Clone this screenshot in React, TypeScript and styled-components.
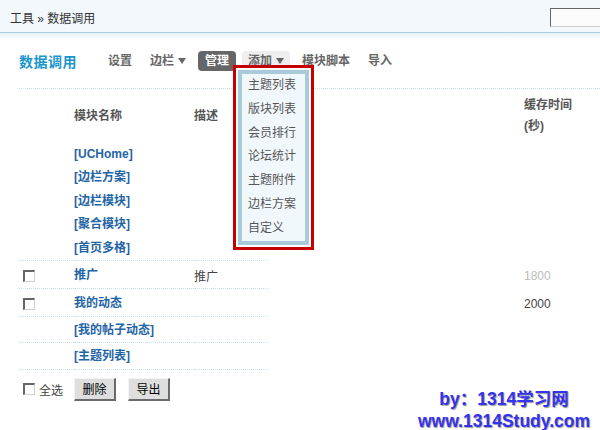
import styled, { createGlobalStyle } from "styled-components";

const GlobalStyle = createGlobalStyle`
  html, body {
    margin: 0;
    padding: 0;
    background: #fff;
  }
  body {
    font: 12px "Liberation Sans", "Noto Sans CJK SC", sans-serif;
    color: #333;
  }
`;

const Page = styled.div`
  position: relative;
  width: 600px;
  height: 430px;
  overflow: hidden;
`;

const TopBar = styled.div`
  height: 32px;
  display: flex;
  align-items: center;
  padding-left: 10px;
  background: #f2f8fb;
  border-bottom: 1px solid #a9cfdc;
  overflow: hidden;
`;

const Crumb = styled.div`
  flex: 1;
  color: #333;
  padding-top: 3px;
`;

const SearchBox = styled.input`
  flex-shrink: 0;
  width: 62px;
  height: 19px;
  margin-right: -12px;
  margin-top: 3px;
  box-sizing: border-box;
  border-style: solid;
  border-width: 1px;
  border-color: #666 #ccc #ccc #666;
  background: #fcfcfc;
`;

const Main = styled.div`
  padding: 17px 0 0 19px;
  background: linear-gradient(to bottom, #e6f1f6 0, #fff 8px) no-repeat;
`;

const NavRow = styled.div`
  display: flex;
  align-items: center;
  height: 20px;
  padding-top: 1px;
  margin-bottom: 17px;
`;

const Title = styled.h1`
  margin: 0 25px 0 0;
  font-size: 14px;
  font-weight: bold;
  color: #1996cc;
  letter-spacing: 0.5px;
`;

const Nav = styled.div`
  display: flex;
  gap: 6px;
`;

const NavItem = styled.div<{ $variant?: "active" | "open" }>`
  position: relative;
  height: 20px;
  line-height: 20px;
  padding: 0 ${(p) => (p.$variant === "active" ? "7px" : "6px")};
  font-weight: bold;
  color: ${(p) => (p.$variant === "active" ? "#fff" : "#666")};
  background: ${(p) =>
    p.$variant === "active" ? "#666" : p.$variant === "open" ? "#eeeeee" : "transparent"};
  border-radius: 4px;
  white-space: nowrap;
`;

const Caret = styled.span`
  display: inline-block;
  margin-left: 4px;
  vertical-align: 1px;
  border-left: 4px solid transparent;
  border-right: 4px solid transparent;
  border-top: 6px solid #666;
`;

const Menu = styled.div`
  position: absolute;
  top: 14px;
  left: -9px;
  z-index: 5;
  width: 81px;
  box-sizing: border-box;
  border: 3px solid #c40000;
  padding: 2px;
  background: #fff;
`;

const MenuInner = styled.ul`
  margin: 0;
  padding: 0 0 0 6px;
  list-style: none;
  border: 4px solid #a9cbd9;
  background: #f1f8fc;
`;

const MenuItem = styled.li`
  line-height: 23.8px;
  font-weight: normal;
  color: #555;
`;

const Table = styled.div`
  border-top: 1px dotted #c9e0ea;
`;

const Row = styled.div`
  display: grid;
  grid-template-columns: 55px 120px 74px 256px auto;
`;

const Cell = styled.div<{ $ruled?: boolean; $h?: number; $stack?: boolean }>`
  display: flex;
  box-sizing: border-box;
  padding-top: 2px;
  flex-direction: ${(p) => (p.$stack ? "column" : "row")};
  justify-content: ${(p) => (p.$stack ? "center" : "flex-start")};
  align-items: ${(p) => (p.$stack ? "flex-start" : "center")};
  min-height: ${(p) => (p.$h ? `${p.$h}px` : "auto")};
  border-bottom: ${(p) => (p.$ruled ? "1px dotted #c9e0ea" : "none")};
`;

const HeadText = styled.span`
  font-weight: bold;
  color: #555;
  line-height: 21px;
`;

const NameLink = styled.a`
  font-weight: bold;
  color: #2364a6;
  text-decoration: none;
  line-height: 23.4px;
`;

const Desc = styled.span`
  color: #444;
`;

const Cache = styled.span<{ $muted?: boolean }>`
  color: ${(p) => (p.$muted ? "#bbb" : "#444")};
`;

const Check = styled.input.attrs({ type: "checkbox" })`
  appearance: none;
  width: 12px;
  height: 12px;
  margin: 0 0 0 4px;
  box-sizing: border-box;
  border-style: solid;
  border-width: 2px 1px 1px 2px;
  border-color: #666 #d4d0c8 #d4d0c8 #666;
  background: #fff;
`;

const Footer = styled.div`
  display: flex;
  align-items: center;
  height: 23px;
  margin-top: 8px;
`;

const SelectAll = styled.label`
  display: flex;
  align-items: center;
  gap: 4px;
  width: 55px;
  color: #444;
`;

const Button = styled.button`
  width: 42px;
  height: 23px;
  margin-right: 12px;
  padding: 0;
  font: 12px "Liberation Sans", "Noto Sans CJK SC", sans-serif;
  color: #000;
  background: #dedede;
  border-style: solid;
  border-width: 1px 2px 2px 1px;
  border-color: #f4f4f4 #6a6a6a #6a6a6a #f4f4f4;
`;

const Watermark = styled.div`
  position: absolute;
  left: 414px;
  top: 388px;
  width: 180px;
  text-align: center;
  font: bold 17.5px "Liberation Sans", "Noto Sans CJK SC", sans-serif;
  line-height: 22px;
  color: #3333f0;
  text-shadow: 1px 1px 1px #9a9a9a;
`;

const menuItems = ["主题列表", "版块列表", "会员排行", "论坛统计", "主题附件", "边栏方案", "自定义"];
const groupLinks = ["[UCHome]", "[边栏方案]", "[边栏模块]", "[聚合模块]", "[首页多格]"];

export default function App() {
  return (
    <Page>
      <GlobalStyle />
      <TopBar>
        <Crumb>工具 » 数据调用</Crumb>
        <SearchBox />
      </TopBar>
      <Main>
        <NavRow>
          <Title>数据调用</Title>
          <Nav>
            <NavItem>设置</NavItem>
            <NavItem>
              边栏<Caret />
            </NavItem>
            <NavItem $variant="active">管理</NavItem>
            <NavItem $variant="open">
              添加<Caret />
              <Menu>
                <MenuInner>
                  {menuItems.map((m) => (
                    <MenuItem key={m}>{m}</MenuItem>
                  ))}
                </MenuInner>
              </Menu>
            </NavItem>
            <NavItem>模块脚本</NavItem>
            <NavItem>导入</NavItem>
          </Nav>
        </NavRow>

        <Table>
          <Row>
            <Cell $h={52} />
            <Cell $h={52}>
              <HeadText>模块名称</HeadText>
            </Cell>
            <Cell $h={52}>
              <HeadText>描述</HeadText>
            </Cell>
            <Cell $h={52} />
            <Cell $h={52} $stack>
              <HeadText>缓存时间</HeadText>
              <HeadText>(秒)</HeadText>
            </Cell>
          </Row>
          <Row>
            <Cell $ruled />
            <Cell $ruled $stack>
              {groupLinks.map((l) => (
                <NameLink key={l} href="#">
                  {l}
                </NameLink>
              ))}
            </Cell>
            <Cell $ruled />
            <Cell />
            <Cell />
          </Row>
          <Row>
            <Cell $ruled $h={28}>
              <Check />
            </Cell>
            <Cell $ruled $h={28}>
              <NameLink href="#">推广</NameLink>
            </Cell>
            <Cell $ruled $h={28}>
              <Desc>推广</Desc>
            </Cell>
            <Cell />
            <Cell>
              <Cache $muted>1800</Cache>
            </Cell>
          </Row>
          <Row>
            <Cell $ruled $h={28}>
              <Check />
            </Cell>
            <Cell $ruled $h={28}>
              <NameLink href="#">我的动态</NameLink>
            </Cell>
            <Cell $ruled $h={28} />
            <Cell />
            <Cell>
              <Cache>2000</Cache>
            </Cell>
          </Row>
          <Row>
            <Cell $ruled $h={23} />
            <Cell $ruled $h={23}>
              <NameLink href="#">[我的帖子动态]</NameLink>
            </Cell>
            <Cell $ruled $h={23} />
            <Cell />
            <Cell />
          </Row>
          <Row>
            <Cell $ruled $h={23} />
            <Cell $ruled $h={23}>
              <NameLink href="#">[主题列表]</NameLink>
            </Cell>
            <Cell $ruled $h={23} />
            <Cell />
            <Cell />
          </Row>
        </Table>

        <Footer>
          <SelectAll>
            <Check />
            全选
          </SelectAll>
          <Button>删除</Button>
          <Button>导出</Button>
        </Footer>
      </Main>

      <Watermark>
        <div>by：1314学习网</div>
        <div>www.1314Study.com</div>
      </Watermark>
    </Page>
  );
}
